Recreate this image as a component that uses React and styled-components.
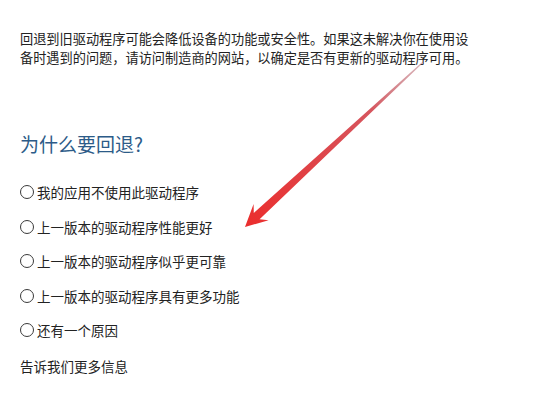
import React from "react";
import styled, { createGlobalStyle } from "styled-components";

const Global = createGlobalStyle`
  html, body { margin: 0; padding: 0; background: #ffffff; }
  body { font-family: "Noto Sans CJK SC", "Noto Sans", sans-serif; color: #2a2a2a; }
`;

const Page = styled.div`
  position: relative;
  width: 534px;
  height: 399px;
  overflow: hidden;
  box-sizing: border-box;
  padding: 29px 0 0 20px;
`;

const Intro = styled.p`
  margin: 0;
  width: 458px;
  font-size: 13.2px;
  line-height: 19px;
  color: #222222;
`;

const Heading = styled.h2`
  margin: 65px 0 0;
  font-size: 19px;
  font-weight: 400;
  line-height: 24px;
  color: #2c5b88;
`;

const Options = styled.div`
  margin-top: 26px;
  display: flex;
  flex-direction: column;
  gap: 14.5px;
`;

const Option = styled.label`
  display: flex;
  align-items: center;
  gap: 3px;
  height: 20px;
  font-size: 13.5px;
  line-height: 20px;
  color: #222222;
`;

const Radio = styled.span`
  box-sizing: border-box;
  width: 14px;
  height: 14px;
  border-radius: 50%;
  border: 1.3px solid #3a3a3a;
  background: #fff;
  flex: none;
`;

const More = styled.div`
  margin-top: 16px;
  font-size: 13.5px;
  line-height: 20px;
  color: #222222;
`;

const Overlay = styled.svg`
  position: absolute;
  left: 0;
  top: 0;
  pointer-events: none;
`;

const reasons = [
  "我的应用不使用此驱动程序",
  "上一版本的驱动程序性能更好",
  "上一版本的驱动程序似乎更可靠",
  "上一版本的驱动程序具有更多功能",
  "还有一个原因",
];

export default function App() {
  return (
    <>
      <Global />
      <Page>
        <Intro>
          回退到旧驱动程序可能会降低设备的功能或安全性。如果这未解决你在使用设备时遇到的问题，请访问制造商的网站，以确定是否有更新的驱动程序可用。
        </Intro>
        <Heading>为什么要回退?</Heading>
        <Options>
          {reasons.map((r) => (
            <Option key={r}>
              <Radio />
              {r}
            </Option>
          ))}
        </Options>
        <More>告诉我们更多信息</More>
        <Overlay width="534" height="399" viewBox="0 0 534 399">
          <defs>
            <linearGradient id="arrowGrad" x1="423" y1="62" x2="250" y2="220" gradientUnits="userSpaceOnUse">
              <stop offset="0" stopColor="#b5707a" stopOpacity="0.5" />
              <stop offset="0.3" stopColor="#d2434c" stopOpacity="0.9" />
              <stop offset="1" stopColor="#ea2f2f" />
            </linearGradient>
          </defs>
          <polygon
            points="423.4,62.4 259.6,219.2 268.6,220.2 245,227 253.6,204 253.8,213 422.8,61.6"
            fill="url(#arrowGrad)"
          />
        </Overlay>
      </Page>
    </>
  );
}
